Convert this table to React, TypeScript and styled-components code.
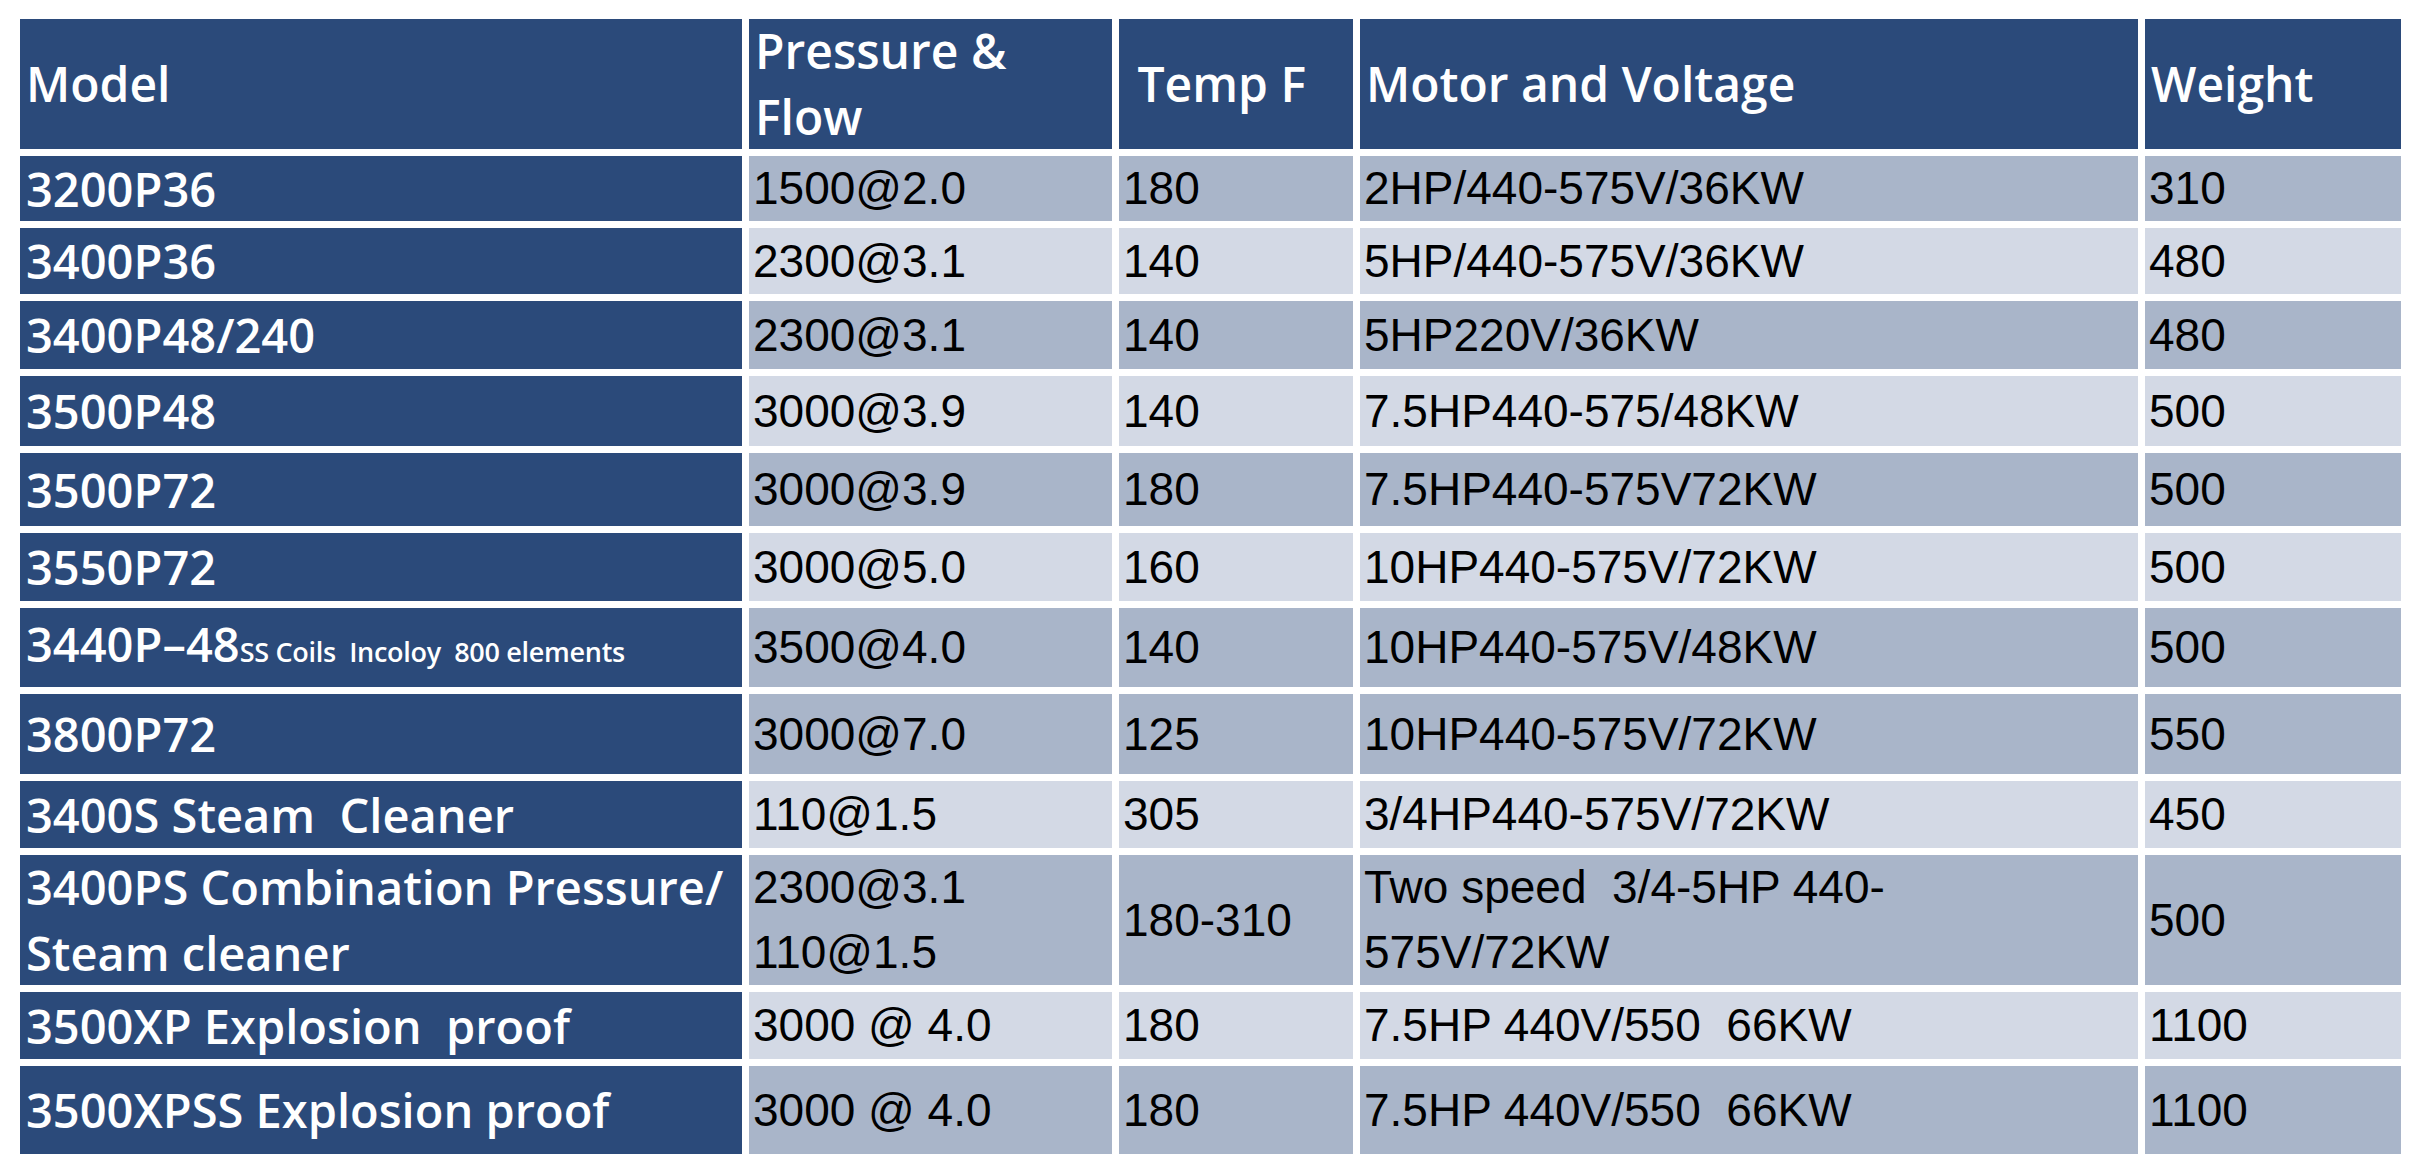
import React from "react";
import styled, { createGlobalStyle } from "styled-components";

type Tone = "dark" | "light";

interface IRow {
  model: React.ReactNode;
  flow: string;
  temp: string;
  motor: string;
  weight: string;
  height: number;
  tone: Tone;
}

const colors = {
  navy: "#2b4a7a",
  dark: "#a9b5c9",
  light: "#d3d9e5",
};

const GlobalStyle = createGlobalStyle`
  body {
    margin: 0;
    background: #ffffff;
  }
`;

const STable = styled.div`
  display: flex;
  flex-direction: column;
  gap: 7px;
  padding: 19px 0 0 20px;
  width: 2381px;
`;

const SRow = styled.div<{ $h: number }>`
  display: grid;
  grid-template-columns: 722px 363px 234px 778px 256px;
  grid-template-rows: ${({ $h }) => $h}px;
  column-gap: 7px;
  flex: none;
`;

const SHeadCell = styled.div`
  display: flex;
  align-items: center;
  min-height: 0;
  overflow: hidden;
  background: ${colors.navy};
  color: #ffffff;
  font-family: "Open Sans", "Noto Sans", sans-serif;
  font-weight: 600;
  font-size: 48px;
  line-height: 66px;
  padding: 0 6px;
  white-space: pre-wrap;
`;

const SModelCell = styled.div`
  display: flex;
  align-items: center;
  min-height: 0;
  background: ${colors.navy};
  color: #ffffff;
  font-family: "Open Sans", "Noto Sans", sans-serif;
  font-weight: 600;
  font-size: 47px;
  line-height: 66px;
  padding: 0 6px;
  white-space: pre-wrap;
`;

const SNote = styled.span`
  font-size: 27px;
  letter-spacing: -0.3px;
`;

const SDataCell = styled.div<{ $tone: Tone }>`
  display: flex;
  align-items: center;
  min-height: 0;
  background: ${({ $tone }) => colors[$tone]};
  color: #000000;
  font-family: "Liberation Sans", Arial, sans-serif;
  font-size: 46px;
  line-height: 65px;
  padding: 0 4px;
  white-space: pre-wrap;
`;

const headers = ["Model", "Pressure &\nFlow", " Temp F", "Motor and Voltage", "Weight"];

const rows: IRow[] = [
  { model: "3200P36", flow: "1500@2.0", temp: "180", motor: "2HP/440-575V/36KW", weight: "310", height: 65, tone: "dark" },
  { model: "3400P36", flow: "2300@3.1", temp: "140", motor: "5HP/440-575V/36KW", weight: "480", height: 66, tone: "light" },
  { model: "3400P48/240", flow: "2300@3.1", temp: "140", motor: "5HP220V/36KW", weight: "480", height: 68, tone: "dark" },
  { model: "3500P48", flow: "3000@3.9", temp: "140", motor: "7.5HP440-575/48KW", weight: "500", height: 70, tone: "light" },
  { model: "3500P72", flow: "3000@3.9", temp: "180", motor: "7.5HP440-575V72KW", weight: "500", height: 73, tone: "dark" },
  { model: "3550P72", flow: "3000@5.0", temp: "160", motor: "10HP440-575V/72KW", weight: "500", height: 68, tone: "light" },
  {
    model: (
      <span>
        3440P–48<SNote>SS Coils  Incoloy  800 elements</SNote>
      </span>
    ),
    flow: "3500@4.0",
    temp: "140",
    motor: "10HP440-575V/48KW",
    weight: "500",
    height: 79,
    tone: "dark",
  },
  { model: "3800P72", flow: "3000@7.0", temp: "125", motor: "10HP440-575V/72KW", weight: "550", height: 80, tone: "dark" },
  { model: "3400S Steam  Cleaner", flow: "110@1.5", temp: "305", motor: "3/4HP440-575V/72KW", weight: "450", height: 67, tone: "light" },
  {
    model: "3400PS Combination Pressure/\nSteam cleaner",
    flow: "2300@3.1\n110@1.5",
    temp: "180-310",
    motor: "Two speed  3/4-5HP 440-\n575V/72KW",
    weight: "500",
    height: 130,
    tone: "dark",
  },
  { model: "3500XP Explosion  proof", flow: "3000 @ 4.0", temp: "180", motor: "7.5HP 440V/550  66KW", weight: "1100", height: 67, tone: "light" },
  { model: "3500XPSS Explosion proof", flow: "3000 @ 4.0", temp: "180", motor: "7.5HP 440V/550  66KW", weight: "1100", height: 88, tone: "dark" },
];

export default function App() {
  return (
    <>
      <GlobalStyle />
      <STable>
        <SRow $h={130}>
          {headers.map((h) => (
            <SHeadCell key={h}>{h}</SHeadCell>
          ))}
        </SRow>
        {rows.map((r, i) => (
          <SRow $h={r.height} key={i}>
            <SModelCell>{r.model}</SModelCell>
            <SDataCell $tone={r.tone}>{r.flow}</SDataCell>
            <SDataCell $tone={r.tone}>{r.temp}</SDataCell>
            <SDataCell $tone={r.tone}>{r.motor}</SDataCell>
            <SDataCell $tone={r.tone}>{r.weight}</SDataCell>
          </SRow>
        ))}
      </STable>
    </>
  );
}
